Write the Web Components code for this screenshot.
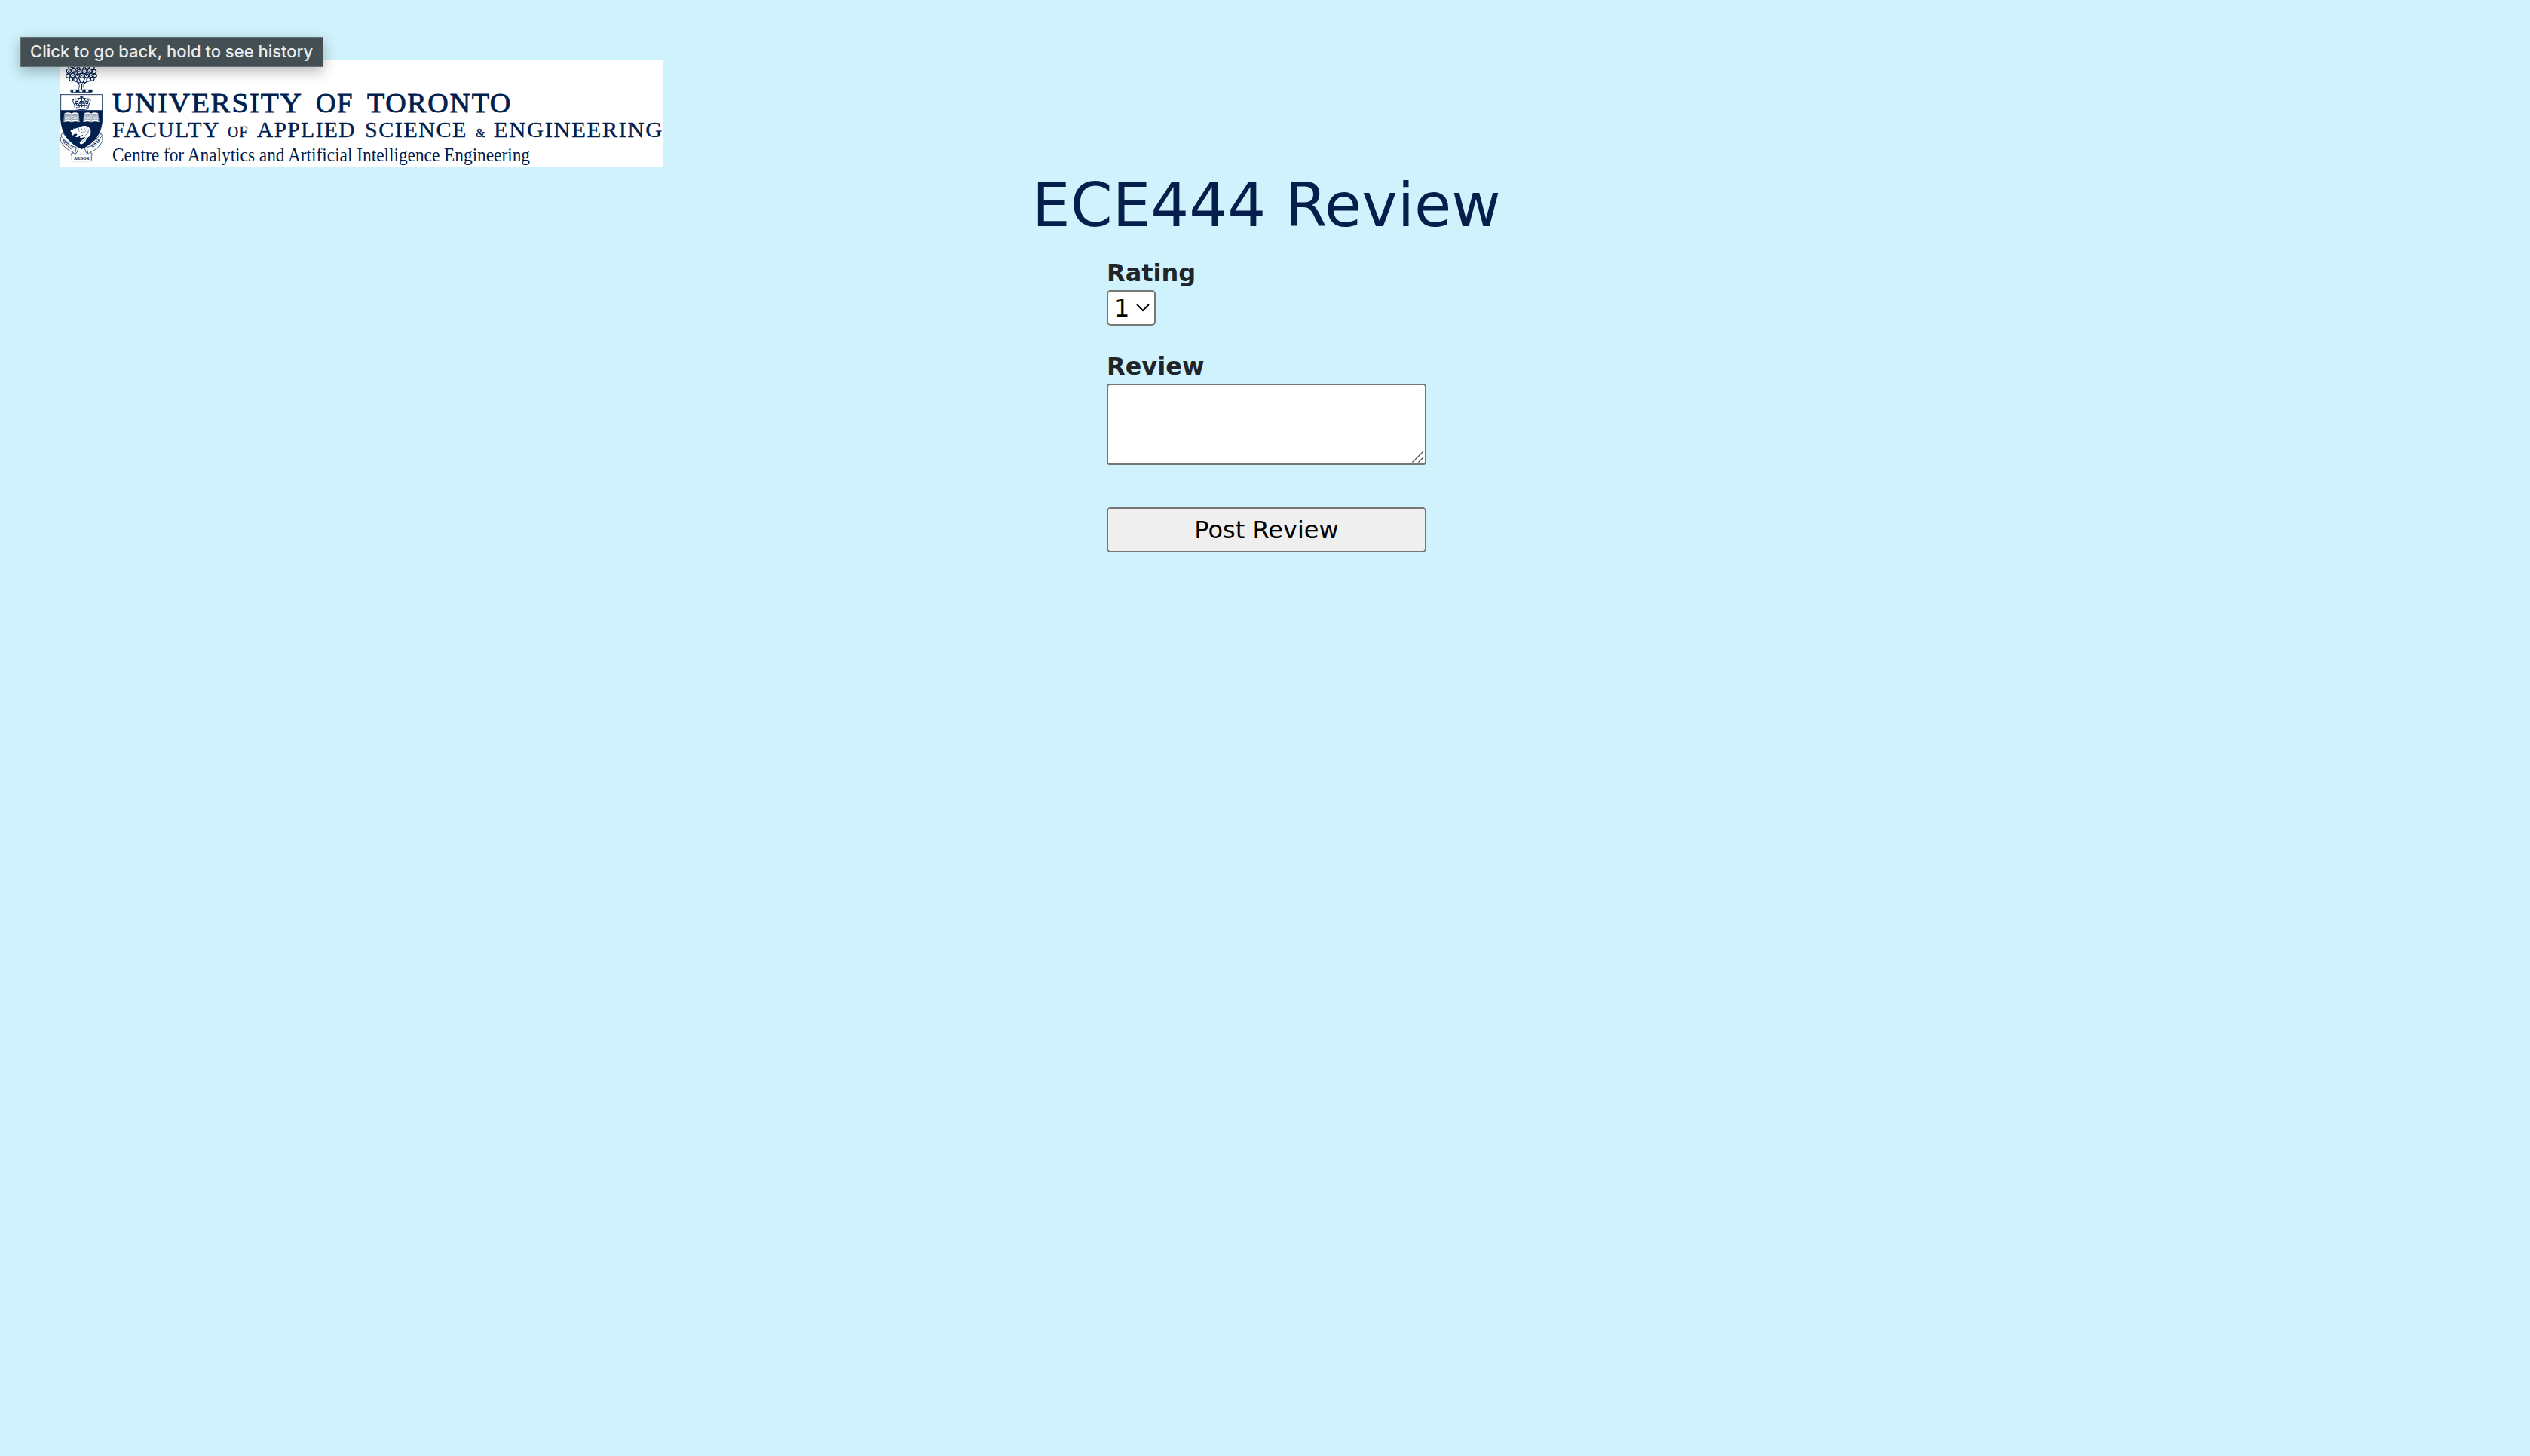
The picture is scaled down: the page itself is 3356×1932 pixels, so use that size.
<!DOCTYPE html>
<html lang="en">
<head>
<meta charset="utf-8">
<title>ECE444 Review</title>
<style>
html, body { margin: 0; background: #cff2fc; }
body { font-family: "DejaVu Sans", sans-serif; color: #212529; height: 1932px; overflow: hidden; }
</style>
</head>
<body>
<review-page></review-page>
<script>
const define = (name, html, setup) => {
  const template = document.createElement('template');
  template.innerHTML = html;
  customElements.define(name, class extends HTMLElement {
    constructor() {
      super();
      this.attachShadow({ mode: 'open' }).append(template.content.cloneNode(true));
    }
    connectedCallback() { if (setup) setup(this); }
  });
};

define('faculty-crest-logo', `
<style>
:host { display: block; width: 800px; height: 141px; background: #fff; overflow: hidden; }
svg { display: block; }
text { font-family: "Liberation Serif", serif; fill: #00204e; }
.caps { letter-spacing: 1.5px; }
</style>
<svg width="800" height="141" viewBox="0 0 800 141">
  <g transform="translate(-10 -5) scale(.33333)" fill="none" stroke="#00204e" stroke-width="2.6" stroke-linejoin="round" stroke-linecap="round">
    <!-- oak tree -->
    <path fill="#fff" d="M98 137q9-10 8-22l-8-12h32l-8 14q0 12 10 20z"/>
    <path stroke-width="3.5" d="M108 110 86 94M122 110l22-16M112 106 103 84M119 106l10-22M115 135l1-26"/>
    <g fill="#fff" stroke-width="4" stroke-dasharray="7 3">
      <circle cx="72" cy="42" r="9"/><circle cx="91" cy="40" r="9"/><circle cx="114" cy="40" r="10"/><circle cx="137" cy="40" r="9"/><circle cx="156" cy="44" r="9"/>
      <circle cx="64" cy="58" r="9"/><circle cx="84" cy="57" r="9"/><circle cx="105" cy="60" r="9"/><circle cx="126" cy="59" r="9"/><circle cx="147" cy="58" r="9"/><circle cx="165" cy="60" r="8"/>
      <circle cx="61" cy="77" r="8"/><circle cx="79" cy="75" r="9"/><circle cx="98" cy="77" r="8"/><circle cx="116" cy="76" r="9"/><circle cx="135" cy="77" r="8"/><circle cx="152" cy="75" r="8"/><circle cx="168" cy="76" r="7"/>
      <circle cx="73" cy="91" r="7"/><circle cx="90" cy="92" r="7"/><circle cx="142" cy="92" r="7"/><circle cx="158" cy="90" r="7"/>
    </g>
    <path stroke-width="2.5" d="M69 42l6 2M88 39l6 3M111 41l6-3M134 40l6 2M61 58l6-2M81 57l6 3M102 60l6-3M123 58l6 3M144 59l6-3M77 74l5 3M95 77l6-2M113 75l5 3M133 77l5-2M150 74l5 3"/>
    <rect x="71" y="133" width="86" height="9" rx="3" fill="#fff"/>
    <path stroke-width="8" stroke-linecap="butt" d="M73 138h8M92 138h14M118 138h13M142 138h14"/>
    <!-- scroll -->
    <g stroke-width="2.2" fill="#fff">
      <path d="M36 307q-6 5 0 12l-5 4v14q18 34 49 43l8 8 8-5 10-30Q60 338 42 305z"/>
      <path d="M193 307q6 5 0 12l5 4v14q-18 34-49 43l-8 8-8-5-10-30q52-15 70-48z"/>
      <path d="M38 322q18 32 56 40l-6 26M191 322q-18 32-56 40l6 26"/>
      <path d="M73 390q0-7 7-7 0 6 6 6h58q6 0 6-6 7 0 7 7l-3 7v15q0 4-4 4H80q-4 0-4-4v-15z"/>
    </g>
    <!-- shield -->
    <path fill="#fff" stroke="none" d="M32 152h165v64H32z"/>
    <path fill="#00204e" d="M32 215h165v35q-3 83-82 118Q35 332 32 250z"/>
    <path d="M32 152h165v63M32 152v64"/>
    <!-- crown -->
    <g stroke-width="3">
      <path d="M88 196q27-7 54 0l-2 13q-25 6-50 0zM88 195q-9-12-8-22 8-8 15-4 10-7 20 1 10-8 20-1 7-4 15 4 1 10-8 22M96 193q-12-12-6-23M134 193q12-12 6-23M105 193q-11-14 0-24M125 193q11-14 0-24M115 192v-22"/>
      <path stroke-width="4" d="M115 158v9M110 162h10M95 203h1M105 201h1M115 200h1M125 201h1M135 203h1"/>
      <path stroke-width="4" d="M81 172h2M147 172h2M92 178h6M132 178h6M109 179h12M90 187h7M106 186h5M119 186h5M133 187h7"/>
    </g>
    <!-- books -->
    <g>
      <path fill="#fff" stroke="#fff" stroke-width="1.5" d="M48 226q15-6 27 1 12-7 27-1l4 34q-18-5-31 1-13-6-30-1z"/>
      <path stroke-width="1.5" d="M75 227v33M53 230q10-3 18 1M53 235q10-3 18 1M52 240q10-3 19 1M52 245q10-3 19 1M51 250q10-3 20 1M79 231q8-4 18-1M79 236q8-4 18-1M79 241q8-4 19-1M79 246q8-4 19-1M79 251q9-4 20-1M49 228l-2 29M101 228l3 29"/>
    </g>
    <g>
      <path fill="#fff" stroke="#fff" stroke-width="1.5" d="M126 226q15-6 27 1 12-7 27-1l4 34q-18-5-31 1-13-6-30-1z"/>
      <path stroke-width="1.5" d="M153 227v33M131 230q10-3 18 1M131 235q10-3 18 1M130 240q10-3 19 1M130 245q10-3 19 1M129 250q10-3 20 1M157 231q8-4 18-1M157 236q8-4 18-1M157 241q8-4 19-1M157 246q8-4 19-1M157 251q9-4 20-1M127 228l-2 29M179 228l3 29"/>
    </g>
    <!-- beaver -->
    <path fill="#fff" stroke="none" d="M70 297l5-7 6 1 2-5 5 3q8-6 14-5 12-10 28-8 18 3 21 20 2 17-8 24l-9 7q-1 15-18 22-8 1-9-5 2-9 17-17l6-7-14 4-8-1 1-4 10-2 2-6-14 6-10 5-8-3 5-4 4-6-10-2-8 7-6-3 5-7-4-2z"/>
    <path stroke-width="1.5" d="M104 286q-4 8 2 13M113 284l5 10M124 281l4 12M135 283l1 12M144 291l-4 10M112 300q12 8 20-4M130 313q11-3 12-12M112 337l17-15M116 340l17-16M82 292h2"/>
    <!-- motto -->
    <g fill="#00204e" stroke="none" font-weight="bold">
      <text x="84" y="410" font-size="17" textLength="62" lengthAdjust="spacingAndGlyphs">ARBOR</text>
      <text transform="translate(35 337) rotate(43)" font-size="20" textLength="52" lengthAdjust="spacingAndGlyphs">VELUT</text>
      <text transform="translate(157 366) rotate(-42)" font-size="20" textLength="42" lengthAdjust="spacingAndGlyphs">ÆVO</text>
    </g>
  </g>
  <text class="caps" y="68.5" font-size="35.5" stroke="#00204e" stroke-width=".8"><tspan x="69" textLength="251" lengthAdjust="spacingAndGlyphs">UNIVERSITY</tspan> <tspan x="339" textLength="50" lengthAdjust="spacingAndGlyphs">OF</tspan> <tspan x="407" textLength="192" lengthAdjust="spacingAndGlyphs">TORONTO</tspan></text>
  <text class="caps" y="101.5" font-size="29" stroke="#00204e" stroke-width=".35"><tspan x="69" textLength="142" lengthAdjust="spacingAndGlyphs">FACULTY</tspan> <tspan x="222" font-size="20.5" textLength="28" lengthAdjust="spacingAndGlyphs">OF</tspan> <tspan x="261" textLength="131" lengthAdjust="spacingAndGlyphs">APPLIED</tspan> <tspan x="404" textLength="136" lengthAdjust="spacingAndGlyphs">SCIENCE</tspan> <tspan x="551" font-size="17" textLength="14" lengthAdjust="spacingAndGlyphs">&amp;</tspan> <tspan x="575" textLength="225" lengthAdjust="spacingAndGlyphs">ENGINEERING</tspan></text>
  <text y="134" font-size="25" textLength="554" x="69" lengthAdjust="spacingAndGlyphs">Centre for Analytics and Artificial Intelligence Engineering</text>
</svg>`);

define('hint-bubble', `
<style>
:host { position: absolute; left: 27px; top: 49px; box-sizing: border-box; width: 402px; height: 40px; padding-left: 12px;
  background: #434f52; border: 1.5px solid #667174; box-shadow: 0 6px 18px rgba(0,0,0,.28);
  color: #ececec; font: 500 22px/37px Inter, sans-serif; white-space: nowrap; }
</style><slot></slot>`);

define('page-title', `
<style>
:host { display: block; text-align: center; }
h1 { margin: 0; font-weight: 400; font-size: 80px; line-height: 96px; letter-spacing: .1px; color: #051e4b; }
</style><h1><slot></slot></h1>`);

define('form-field', `
<style>
:host { display: flex; flex-direction: column; align-items: flex-start; }
label { box-sizing: border-box; height: 47px; padding-top: 1px; font-weight: 700; font-size: 32px; line-height: 47px; white-space: nowrap; }
</style><label></label><slot></slot>`, el => { el.shadowRoot.querySelector('label').textContent = el.getAttribute('label'); });

define('rating-select', `
<style>
:host { display: grid; width: 65px; height: 47px; }
select, svg { grid-area: 1 / 1; }
select { appearance: none; box-sizing: border-box; width: 65px; height: 47px; margin: 0; padding: 1px 0 0 8px; border: 2px solid #767676; border-radius: 5px;
  background: #fff; color: #000; font: 32px/40px "DejaVu Sans", sans-serif; }
svg { pointer-events: none; }
</style>
<select><option>1</option><option>2</option><option>3</option><option>4</option><option>5</option></select>
<svg width="65" height="47" fill="none" stroke="#000" stroke-width="2"><path d="M40 19l8 8 8-8"/></svg>`);

define('review-input', `
<style>
:host { display: grid; width: 424px; height: 108px; }
textarea, svg { grid-area: 1 / 1; }
textarea { box-sizing: border-box; width: 424px; height: 108px; margin: 0; border: 2px solid #767676; border-radius: 4px; background: #fff; resize: none; overflow: hidden; }
svg { pointer-events: none; }
</style>
<textarea></textarea>
<svg width="424" height="108" fill="none" stroke="#555" stroke-width="1.4"><path d="M405.500 104.500l14.500-14.500M413.500 104.500l6.500-6.500"/></svg>`);

define('submit-button', `
<style>
:host { display: block; }
button { box-sizing: border-box; display: block; width: 100%; height: 60px; margin: 0; padding: 1px 0 0; border: 2px solid #767676; border-radius: 5px; background: #efefef; color: #000; font: 32px/55px "DejaVu Sans", sans-serif; }
</style><button><slot></slot></button>`);

define('review-page', `
<style>
:host { display: flex; flex-direction: column; box-sizing: border-box; height: 1932px; padding: 80px 76px 0 80px; }
page-title { margin-top: 4px; }
form { display: flex; flex-direction: column; width: 424px; margin: 17px 0 0 1388px; }
.review { margin-top: 30px; }
submit-button { margin-top: 56px; }
</style>
<faculty-crest-logo></faculty-crest-logo>
<hint-bubble>Click to go back, hold to see history</hint-bubble>
<page-title>ECE444 Review</page-title>
<form>
  <form-field label="Rating"><rating-select></rating-select></form-field>
  <form-field class="review" label="Review"><review-input></review-input></form-field>
  <submit-button>Post Review</submit-button>
</form>`);
</script>
</body>
</html>
